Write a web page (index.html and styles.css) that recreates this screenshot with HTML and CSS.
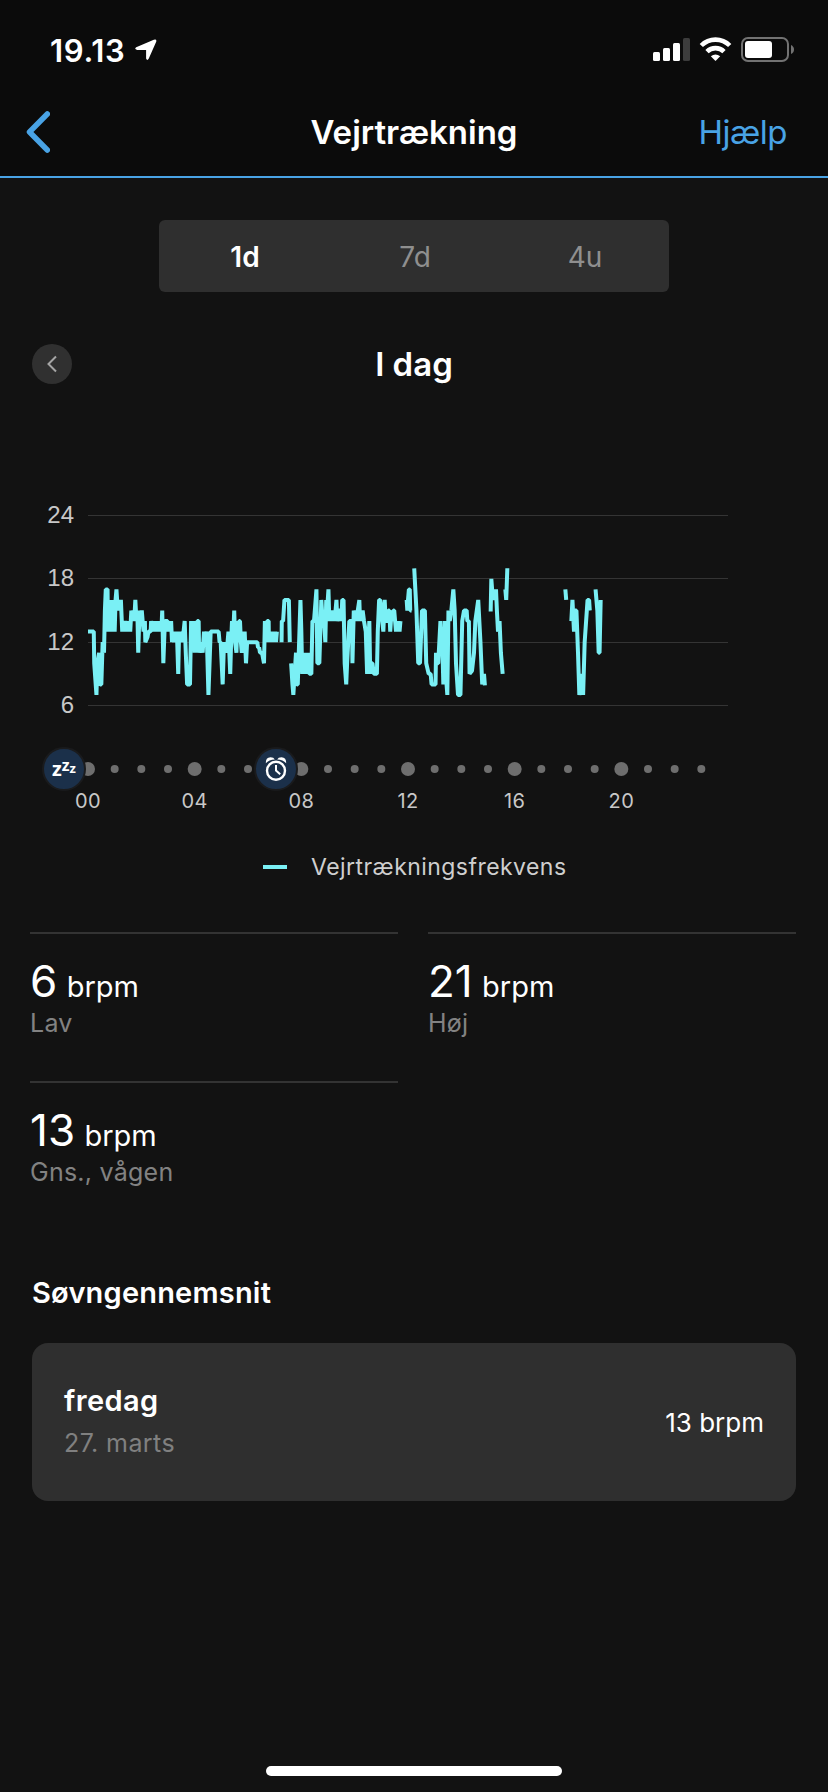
FILE: index.html
```
<!DOCTYPE html>
<html lang="da">

<head>
    <meta charset="utf-8">
    <title>Vejrtrækning</title>
    <link rel="stylesheet" href="styles.css">
</head>

<body>
    <header>
        <div class="statusbar">
            <span class="clock">19.13</span>
            <svg class="location" width="22" height="22" viewBox="0 0 22 22">
                <path d="M1.2 8.2 L18.8 0.7 Q22 -0.2 21.2 2.8 L13.8 19.6 Q12.2 22.400 11.100 19.600 V11 H2.200 Q-1.200 9.800 1.200 8.200 Z" fill="#fff" />
            </svg>
            <svg class="signal" width="142" height="26" viewBox="0 0 142 26">
                <g fill="#fff">
                    <rect x="0" y="15" width="7" height="9" rx="1.500" />
                    <rect x="10" y="11" width="7" height="13" rx="1.500" />
                    <rect x="20" y="6" width="7" height="18" rx="1.500" />
                    <rect x="30" y="1" width="7" height="23" rx="1.500" fill="#3c3c3c" />
                </g>
                <g fill="none" stroke="#fff" stroke-width="4.600">
                    <path d="M48.300 8.500 A20 20 0 0 1 76.700 8.500" />
                    <path d="M54 14.700 A12 12 0 0 1 71 14.700" />
                </g>
                <path d="M57.800 19.300 Q62.500 15.500 67.200 19.300 L62.500 24 Z" fill="#fff" />
                <rect x="89" y="1" width="46" height="23" rx="6" fill="none" stroke="#727272" stroke-width="2" />
                <rect x="92" y="4" width="27" height="17" rx="3" fill="#fff" />
                <path d="M138 8 Q141 9.500 141 12.500 Q141 15.500 138 17 Z" fill="#727272" />
            </svg>
        </div>
        <nav>
            <a class="back" href="#">
                <svg width="24" height="42" viewBox="0 0 24 42">
                    <path d="M21.300 3 L3.500 21 L21.300 39" />
                </svg>
            </a>
            <h1>Vejrtrækning</h1>
            <a class="help" href="#">Hjælp</a>
        </nav>
    </header>

    <main>
        <div class="tabs">
            <span class="tab active">1d</span>
            <span class="tab">7d</span>
            <span class="tab">4u</span>
        </div>

        <div class="day">
            <a class="prev" href="#">
                <svg width="12" height="18" viewBox="0 0 12 18">
                    <path d="M10 1.500 L2.500 9 L10 16.500" />
                </svg>
            </a>
            <h2>I dag</h2>
        </div>

        <div class="chart">
            <div class="yaxis">
                <span>24</span>
                <span>18</span>
                <span>12</span>
                <span>6</span>
            </div>
            <svg id="plot" width="640" height="191" viewBox="0 0 640 191"></svg>
        </div>

        <div class="timeline">
            <svg id="dots" width="640" height="14" viewBox="0 0 640 14"></svg>
            <div class="marker sleep"><b>z</b><b>z</b><b>z</b></div>
            <div class="marker wake">
                <svg width="24" height="26" viewBox="0 0 24 26">
                    <circle cx="12" cy="14.700" r="9" fill="none" stroke="#fff" stroke-width="2.400" />
                    <path d="M12 9 V14.600 L16.200 18.300" fill="none" stroke="#fff" stroke-width="2" />
                    <path d="M1.800 7.200 Q1.600 1.300 6.500 1.200 Q9.800 1.200 10.800 3.500 Q5 3.800 1.800 7.200 Z" fill="#fff" />
                    <path d="M22.200 7.200 Q22.400 1.300 17.500 1.200 Q14.200 1.200 13.200 3.500 Q19 3.800 22.200 7.200 Z" fill="#fff" />
                </svg>
            </div>
        </div>
        <div class="hours">
            <span>00</span>
            <span>04</span>
            <span>08</span>
            <span>12</span>
            <span>16</span>
            <span>20</span>
        </div>

        <div class="legend">
            <i></i>
            <span>Vejrtrækningsfrekvens</span>
        </div>

        <div class="stats">
            <div class="stat">
                <div class="value">6 <small>brpm</small></div>
                <div class="label">Lav</div>
            </div>
            <div class="stat">
                <div class="value">21 <small>brpm</small></div>
                <div class="label">Høj</div>
            </div>
            <div class="stat">
                <div class="value">13 <small>brpm</small></div>
                <div class="label">Gns., vågen</div>
            </div>
        </div>

        <h3>Søvngennemsnit</h3>
        <div class="card">
            <div>
                <div class="weekday">fredag</div>
                <div class="date">27. marts</div>
            </div>
            <div class="average">13 brpm</div>
        </div>
    </main>

    <footer></footer>

    <script src="chart.js"></script>
</body>

</html>
```
FILE: styles.css
```
body {
    margin: 0;
    height: 1792px;
    display: flex;
    flex-direction: column;
    background-color: #121212;
    color: #fff;
    font-family: Inter, "Liberation Sans", sans-serif;
}

a {
    text-decoration: none;
}

h1, h2, h3 {
    margin: 0;
    font-weight: 600;
}

header {
    background-color: #0b0b0b;
    border-bottom: 2px solid #49a3e5;
}

.statusbar {
    display: flex;
    align-items: center;
    height: 76px;
    padding: 12px 33px 0 50px;
}

.clock {
    width: 85px;
    font-size: 31px;
    font-weight: 600;
    letter-spacing: 0.7px;
}

.signal {
    margin-left: auto;
}

nav {
    display: grid;
    grid-template-columns: 1fr auto 1fr;
    align-items: center;
    height: 88px;
    padding: 0 41px 0 26px;
}

nav h1 {
    font-size: 33px;
    margin-left: 15px;
}

.back {
    display: flex;
}

.back path {
    fill: none;
    stroke: #49a3e5;
    stroke-width: 5.5;
    stroke-linecap: round;
    stroke-linejoin: round;
}

.help {
    justify-self: end;
    color: #49a3e5;
    font-size: 33px;
    letter-spacing: -0.5px;
}

.tabs {
    display: grid;
    grid-template-columns: repeat(3, 1fr);
    width: 510px;
    height: 72px;
    margin: 42px auto 0;
    border-radius: 6px;
    background-color: #2f2f2f;
}

.tab {
    display: flex;
    align-items: center;
    justify-content: center;
    padding: 2px 0 0 2px;
    font-size: 28px;
    color: #8f8f8f;
}

.tab.active {
    color: #fff;
    font-weight: 600;
}

.day {
    display: grid;
    grid-template-columns: 40px 1fr 40px;
    align-items: center;
    height: 40px;
    margin: 52px 32px 0;
}

.day h2 {
    text-align: center;
    font-size: 33px;
}

.prev {
    display: flex;
    align-items: center;
    justify-content: center;
    width: 40px;
    height: 40px;
    border-radius: 50%;
    background-color: #303030;
}

.prev path {
    fill: none;
    stroke: #a5a5a5;
    stroke-width: 2;
}

.chart {
    display: flex;
    gap: 14px;
    height: 191px;
    margin: 131px 0 0 34px;
}

.yaxis {
    display: flex;
    flex-direction: column;
    justify-content: space-between;
    width: 40px;
    margin: -14px 0 -12px;
    text-align: right;
    font: 24px/27px "Liberation Sans", sans-serif;
    color: #c8c8c8;
}

#plot {
    overflow: visible;
}

#plot polyline {
    fill: none;
    stroke: #7af0f5;
    stroke-width: 4;
    stroke-linejoin: bevel;
}

#plot line {
    stroke: #343434;
    stroke-width: 1;
}

.timeline {
    position: relative;
    height: 14px;
    margin: 56px 100px 0 88px;
}

#dots {
    display: block;
    overflow: visible;
    fill: #6e6e6e;
}

.marker {
    position: absolute;
    top: -15px;
    display: flex;
    align-items: center;
    justify-content: center;
    width: 40px;
    height: 40px;
    border: 2px solid #1a1b1d;
    border-radius: 50%;
    background-color: #1b304a;
}

.sleep {
    left: -46px;
}

.wake {
    left: 166px;
}

.sleep b {
    font: bold 20px/20px "Open Sans", sans-serif;
}

.sleep b:nth-child(2) {
    font-size: 16px;
    padding-bottom: 8px;
}

.sleep b:nth-child(3) {
    font-size: 13px;
    padding-bottom: 2px;
}

.hours {
    display: flex;
    gap: 46.7px;
    margin: 13px 0 0 58px;
    font-size: 20px;
    line-height: 24px;
    color: #c8c8c8;
}

.hours span {
    width: 60px;
    text-align: center;
    letter-spacing: 0.5px;
}

.legend {
    display: flex;
    align-items: center;
    gap: 24px;
    height: 32px;
    margin: 38px 0 0 263px;
    font-size: 23px;
    letter-spacing: 0.45px;
    color: #cfcfcf;
}

.legend i {
    width: 24px;
    height: 4px;
    background-color: #7af0f5;
}

.stats {
    display: grid;
    grid-template-columns: 368px 368px;
    column-gap: 30px;
    margin: 49px 0 0 30px;
}

.stat {
    height: 127px;
    padding-top: 20px;
    border-top: 2px solid #333;
}

.value {
    height: 53px;
    font-size: 44px;
    line-height: 54px;
}

.value small {
    font-size: 29px;
    line-height: 1;
    margin-left: -3px;
}

.label {
    font-size: 25px;
    line-height: 32px;
    letter-spacing: 0.25px;
    color: #828282;
}

h3 {
    margin: 45px 0 32px 32px;
    font-size: 29px;
    line-height: 36px;
    letter-spacing: 0.2px;
}

.card {
    display: flex;
    align-items: center;
    justify-content: space-between;
    height: 158px;
    margin: 0 32px;
    padding: 0 32px;
    border-radius: 16px;
    background-color: #2f2f2f;
    line-height: 43px;
}

.weekday {
    font-size: 29px;
    font-weight: 600;
    letter-spacing: 0.4px;
}

.date {
    font-size: 25px;
    letter-spacing: 0.4px;
    color: #808080;
}

.average {
    font-size: 26px;
}

footer {
    width: 296px;
    height: 10px;
    margin: auto auto 16px;
    border-radius: 5px;
    background-color: #fff;
}
```
FILE: chart.js
```
const plot = document.getElementById("plot");
const dots = document.getElementById("dots");

// minutes after midnight, breaths per minute
const series = [
    [[0, 13], [13, 13], [14, 10], [19, 7], [21, 10], [25, 11], [27, 8], [30, 8], [33, 12], [36, 11], [38, 15],
    [40, 17], [44, 17], [45, 13], [48, 16], [50, 13], [53, 16], [55, 13], [57, 15], [60, 13], [62, 16], [64, 17],
    [67, 15], [70, 16], [72, 15], [74, 16], [77, 13], [79, 14], [81, 13], [84, 14], [87, 13], [89, 14], [91, 13],
    [93, 14], [95, 13], [97.5, 15], [99, 14], [102, 15], [104, 14], [106.5, 16], [109, 14], [111, 15], [113, 11],
    [116, 15], [118, 14], [121, 15], [123, 14], [125, 13], [128, 14], [129, 12], [134, 12.5], [136, 13], [138, 13],
    [141, 13], [142, 14], [145, 13], [147, 14], [149, 13], [151, 14], [153, 13], [155, 14], [157, 13], [159, 14],
    [161, 13], [163, 14], [165, 13], [167, 15], [169.5, 10], [173, 14], [176, 14], [179, 14], [181, 13], [183, 14],
    [184.5, 13], [187, 14], [189, 12], [191, 13], [193.5, 12], [196, 13], [198, 12], [200, 13], [203, 9], [205, 13],
    [207, 12], [209, 13], [212, 12], [215, 13], [217.5, 14], [220, 11], [223, 8], [229.5, 8], [232, 14], [235, 12],
    [238, 14], [240, 11], [242, 14], [244, 11], [246, 14], [249, 14], [250, 11], [252, 12], [254, 11], [256, 12],
    [258, 11], [261, 13], [263, 12], [267, 13], [271, 7], [276, 13], [294, 13], [296, 12], [298.5, 12], [303, 8],
    [306, 12], [308, 11], [310, 12], [312, 11], [314, 12], [316, 13], [318, 11], [320, 9], [322, 12], [324, 14],
    [326, 12], [329, 15], [331, 12], [334, 11], [336, 14], [338, 12], [340, 14], [342, 14], [344, 12], [346, 11],
    [348, 13], [350, 11], [352.5, 13], [355.5, 10], [358, 12], [360, 12], [381, 12], [382.5, 11.5], [385, 11.5],
    [387, 11], [391.5, 11], [396, 10], [398, 14], [401, 12], [403, 14], [406.5, 14], [407, 12], [409, 13], [411, 12],
    [413, 13], [415, 12], [417, 13], [419, 12], [421, 13], [423, 12], [425, 13]],
    [[435.5, 12], [436, 14], [439, 14], [442, 16], [452, 16], [454, 12]],
    [[457, 10], [460, 8], [462, 7], [465, 9], [468, 11], [470, 8], [472, 8], [478, 16], [480, 13], [482, 9],
    [484, 11], [486, 9], [488, 10], [490, 9], [492, 11], [494, 9], [496, 11], [498, 9], [502.5, 9], [505, 14],
    [508.5, 14], [514, 17], [516, 10], [520.5, 10], [525, 16], [528, 14], [530, 15], [534, 12], [536, 16],
    [538, 15], [541, 17], [543, 14], [545, 15], [547, 14], [549, 15], [551, 14], [553, 15], [555, 14], [557, 15],
    [559, 16], [561, 14], [565, 15], [568, 15], [570, 14], [572, 16], [575, 16], [577.5, 10], [581, 8], [583, 10],
    [588, 14], [591, 14], [594, 14], [595, 10], [598, 15], [600, 14], [602, 15], [605, 14], [607, 15], [610.5, 16],
    [612, 14], [614, 15], [616, 14], [618, 15], [621, 14], [625, 13], [628, 9], [633, 14], [635, 9], [637, 10],
    [640, 10], [643, 9], [650, 9], [652, 13], [655, 16], [657, 16], [661, 15], [662, 14], [664.5, 13], [667.5, 16],
    [670, 14], [673, 14], [676, 15], [678, 15], [680, 13], [683, 15], [685, 14], [687, 15], [689, 15], [691, 14],
    [693, 13], [695, 14], [697, 13], [699, 14], [701, 13], [703, 14]],
    [[717, 16], [718.5, 15], [720, 16], [722, 17], [724, 17], [725, 15], [728, 15]],
    [[734, 19], [739, 15], [743, 10], [747, 10], [751.5, 15], [758, 15], [761, 10], [766.5, 9], [771, 9], [773, 8],
    [782, 8], [783, 11], [785, 10], [788, 10], [793, 14], [795, 12], [796.5, 13], [799.5, 8], [803, 14], [805, 9],
    [808.5, 7], [811, 15], [814, 14], [817.5, 15], [822, 17], [825, 15], [828, 10], [832.5, 7], [838, 7], [842, 14],
    [846, 15], [852, 15], [853.5, 14], [857, 14], [858.5, 9], [864, 9.3], [868.5, 11], [871.5, 14], [878, 16],
    [883, 12], [887, 8], [891, 9], [893, 7.9]],
    [[906, 14.9], [907.5, 18], [911, 16], [914, 17], [917, 16], [918, 17], [920, 15], [922.5, 13], [926, 14],
    [929, 11], [933, 9]],
    [[939, 17], [941, 16], [943.5, 19]],
    [[1074, 17], [1076, 16]],
    [[1087.5, 14], [1090, 16], [1093.5, 13], [1096, 15], [1099, 15], [1102.5, 11], [1105.5, 7], [1110, 9], [1114, 7],
    [1117.5, 12], [1124, 16], [1127.5, 16], [1129, 15]],
    [[1142, 17], [1146, 15], [1149, 11], [1151, 11], [1153.5, 16]]
];

const x = minutes => minutes / 1440 * 640;
const y = value => 0.5 + (24 - value) * 190 / 18;

let lines = "";
for (let value of [24, 18, 12, 6]) {
    let gridY = Math.floor(y(value)) + 0.5;
    lines += `<line x1="0" x2="640" y1="${gridY}" y2="${gridY}"/>`;
}
for (let part of series) {
    lines += `<polyline points="${part.map(p => x(p[0]) + "," + y(p[1])).join(" ")}"/>`;
}
plot.innerHTML = lines;

let circles = "";
for (let hour = 0; hour < 24; hour++) {
    circles += `<circle cx="${x(hour * 60)}" cy="7" r="${hour % 4 === 0 ? 7 : 4}"/>`;
}
dots.innerHTML = circles;
```
